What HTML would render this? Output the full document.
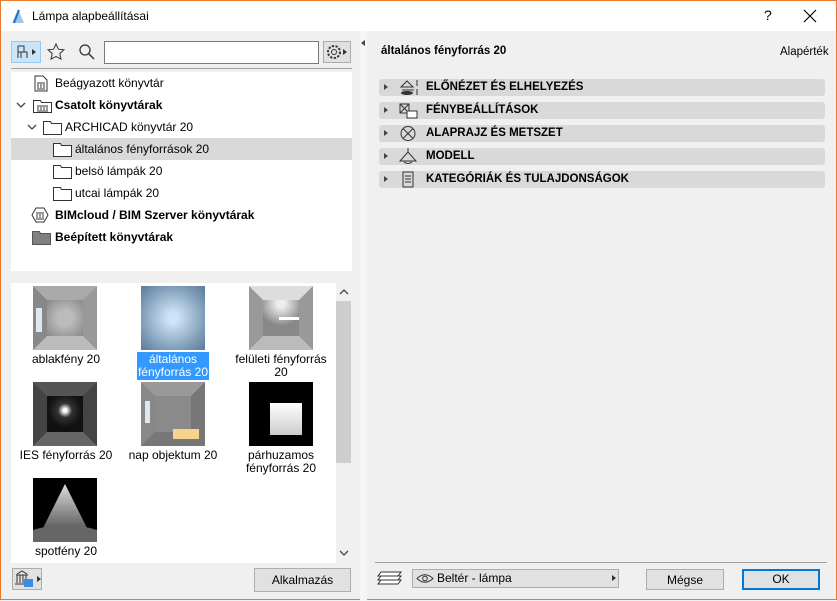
<!DOCTYPE html><html><head><meta charset="utf-8"><style>
*{box-sizing:border-box;margin:0;padding:0}
body{width:837px;height:600px;overflow:hidden;font-family:"Liberation Sans",sans-serif;font-size:12px;color:#000;background:#f0f0f0;position:relative}
.win{position:absolute;left:0;top:0;width:837px;height:600px;border:1px solid #e8792b;}
.abs{position:absolute}
.title{left:0;top:0;width:835px;height:30px;background:#fff}
.tree{left:10px;top:71px;width:341px;height:199px;background:#fff}
.row{position:absolute;left:0;width:341px;height:22px;line-height:22px;font-size:12px}
.b{font-weight:bold}
.fold{position:absolute;top:4px}
.thumbs{left:10px;top:282px;width:325px;height:280px;background:#fff}
.th{position:absolute;width:64px;height:64px}
.lbl{position:absolute;width:110px;text-align:center;font-size:12px;line-height:13px}
.sec{position:absolute;left:378px;width:446px;height:17px;background:#d9d9d9;border-radius:3px;font-weight:bold;font-size:11.5px;line-height:17px}
.sec .t{position:absolute;left:47px}
.sec .a{position:absolute;left:5px;top:5px;border-left:4px solid #444;border-top:3.5px solid transparent;border-bottom:3.5px solid transparent}
.btn{position:absolute;height:22px;background:#e1e1e1;border:1px solid #adadad;text-align:center;line-height:20px;font-size:12px}
</style></head><body><div class="win">
<div class="abs title"></div>
<svg class="abs" style="left:9px;top:7px" width="16" height="16"><path d="M2 15 L8 1 L14 15 Z" fill="#9cc8ee"/><path d="M4 15 L9 2" stroke="#2a6fc0" stroke-width="2"/></svg>
<div class="abs" style="left:31px;top:8px;font-size:12px">Lámpa alapbeállításai</div>
<div class="abs" style="left:763px;top:6px;font-size:14px">?</div>
<svg class="abs" style="left:802px;top:8px" width="14" height="14"><path d="M1 1l12 12M13 1L1 13" stroke="#000" stroke-width="1.2"/></svg>

<div class="abs" style="left:10px;top:40px;width:30px;height:22px;background:#cce4f7;border:1px solid #99c9ef"></div>
<svg class="abs" style="left:14px;top:43px" width="24" height="16"><path d="M3 2h6v6h3v6M3 2v12M3 8h9M6 8v6" stroke="#333" fill="none"/><path d="M17 5l4 3-4 3z" fill="#333"/></svg>
<svg class="abs" style="left:45px;top:41px" width="20" height="20"><path d="M10 2l2.4 5.2 5.6.6-4.2 3.8 1.2 5.6L10 14.4 5 17.2l1.2-5.6L2 7.8l5.6-.6z" fill="none" stroke="#333"/></svg>
<svg class="abs" style="left:77px;top:42px" width="18" height="18"><circle cx="7" cy="7" r="5" fill="none" stroke="#333" stroke-width="1.3"/><path d="M11 11l5 5" stroke="#333" stroke-width="1.5"/></svg>
<div class="abs" style="left:103px;top:40px;width:215px;height:23px;background:#fff;border:1px solid #7a7a7a"></div>
<div class="abs" style="left:322px;top:40px;width:28px;height:22px;background:#e1e1e1;border:1px solid #adadad"></div>
<svg class="abs" style="left:324px;top:42px" width="26" height="18"><circle cx="9" cy="9" r="6" fill="none" stroke="#333" stroke-dasharray="2.2 1.5" stroke-width="2"/><circle cx="9" cy="9" r="2.5" fill="none" stroke="#333"/><path d="M18 6l4 3-4 3z" fill="#333"/></svg>
<div class="abs" style="left:10px;top:67px;width:341px;height:1px;background:#a0a0a0"></div>

<div class="abs tree">
<div class="row" style="top:0"><svg class="abs" style="left:23px;top:3px" width="14" height="17"><path d="M1 1h8l4 4v11H1z" fill="#fff" stroke="#333"/><path d="M3 8h8M4 9v4M7 9v4M10 9v4M3 14h8" stroke="#333"/></svg><span style="position:absolute;left:44px">Beágyazott könyvtár</span></div>
<div class="row b" style="top:22px"><svg class="abs" style="left:5px;top:8px" width="10" height="7"><path d="M1 1l4 4 4-4" stroke="#444" fill="none" stroke-width="1.3"/></svg><svg class="fold" style="left:22px" width="20" height="15"><path d="M0.5 2.5h7l1 2h10v10h-18z" fill="#fff" stroke="#333"/><path d="M4 8h11M5 9v3M8 9v3M11 9v3M14 9v3M4 13h11" stroke="#333"/></svg><span style="position:absolute;left:44px">Csatolt könyvtárak</span></div>
<div class="row" style="top:44px"><svg class="abs" style="left:16px;top:8px" width="10" height="7"><path d="M1 1l4 4 4-4" stroke="#444" fill="none" stroke-width="1.3"/></svg><svg class="fold" style="left:32px" width="20" height="15"><path d="M0.5 1.5h7l1 2h10v11h-18z" fill="#fff" stroke="#333"/></svg><span style="position:absolute;left:54px">ARCHICAD könyvtár 20</span></div>
<div class="row" style="top:66px;background:#d9d9d9"><svg class="fold" style="left:42px" width="20" height="15"><path d="M0.5 1.5h7l1 2h10v11h-18z" fill="#fff" stroke="#333"/></svg><span style="position:absolute;left:64px">általános fényforrások 20</span></div>
<div class="row" style="top:88px"><svg class="fold" style="left:42px" width="20" height="15"><path d="M0.5 1.5h7l1 2h10v11h-18z" fill="#fff" stroke="#333"/></svg><span style="position:absolute;left:64px">belsö lámpák 20</span></div>
<div class="row" style="top:110px"><svg class="fold" style="left:42px" width="20" height="15"><path d="M0.5 1.5h7l1 2h10v11h-18z" fill="#fff" stroke="#333"/></svg><span style="position:absolute;left:64px">utcai lámpák 20</span></div>
<div class="row b" style="top:132px"><svg class="abs" style="left:20px;top:3px" width="18" height="16"><path d="M5 1h8l4 7-4 7H5L1 8z" fill="#fff" stroke="#333"/><path d="M5 6h8M6 7v4M9 7v4M12 7v4M5 12h8" stroke="#333"/></svg><span style="position:absolute;left:44px">BIMcloud / BIM Szerver könyvtárak</span></div>
<div class="row b" style="top:154px"><svg class="fold" style="left:21px" width="20" height="15"><path d="M0.5 1.5h7l1 2h10v11h-18z" fill="#808080" stroke="#555"/></svg><span style="position:absolute;left:44px">Beépített könyvtárak</span></div>
</div>
<div class="abs" style="left:359px;top:30px;width:7px;height:570px;background:#f5f5f5"></div>
<div class="abs" style="left:360px;top:39px;border-right:4px solid #444;border-top:3.5px solid transparent;border-bottom:3.5px solid transparent"></div>

<div class="abs thumbs">
<div class="th" style="left:22px;top:3px;background:radial-gradient(circle,#bbb 30%,#888 100%);border:14px solid #999;border-color:#aaa #999 #bbb #888"></div>
<div class="abs" style="left:25px;top:25px;width:6px;height:24px;background:#dde8f0"></div>
<div class="th" style="left:130px;top:3px;background:radial-gradient(circle,#cfe4f7 10%,#7e9cb8 70%,#5b7a98 100%)"></div>
<div class="th" style="left:238px;top:3px;background:radial-gradient(circle at 50% 10%,#eee 10%,#888 60%);border:14px solid;border-color:#ddd #999 #bbb #999"></div>
<div class="abs" style="left:268px;top:34px;width:20px;height:3px;background:#fff"></div>
<div class="lbl" style="left:0;top:70px">ablakfény 20</div>
<div class="abs" style="left:126px;top:69px;width:72px;height:28px;background:#3399ff"></div>
<div class="lbl" style="left:107px;top:70px;color:#fff">általános<br>fényforrás 20</div>
<div class="lbl" style="left:215px;top:70px">felületi fényforrás<br>20</div>
<div class="th" style="left:22px;top:99px;background:radial-gradient(circle at 50% 40%,#fff 6%,#333 25%,#111 60%);border:14px solid;border-color:#555 #444 #666 #444"></div>
<div class="th" style="left:130px;top:99px;background:#8a8a8a;border:14px solid;border-color:#999 #777 #777 #888"></div>
<div class="abs" style="left:162px;top:146px;width:26px;height:10px;background:#f7d38c"></div>
<div class="abs" style="left:134px;top:118px;width:5px;height:22px;background:#dde8f0"></div>
<div class="th" style="left:238px;top:99px;background:#000"></div>
<div class="abs" style="left:259px;top:120px;width:32px;height:32px;background:linear-gradient(#fff,#ccc)"></div>
<div class="lbl" style="left:0;top:166px">IES fényforrás 20</div>
<div class="lbl" style="left:107px;top:166px">nap objektum 20</div>
<div class="lbl" style="left:215px;top:166px">párhuzamos<br>fényforrás 20</div>
<svg class="th" style="left:22px;top:195px" width="64" height="64"><defs><linearGradient id="g" x1="0" y1="0" x2="0" y2="1"><stop offset="0" stop-color="#ddd"/><stop offset="1" stop-color="#555"/></linearGradient></defs><rect width="64" height="64" fill="#000"/><path d="M32 6L8 54h48z" fill="url(#g)"/><path d="M0 52q32-10 64 0v12H0z" fill="#666"/></svg>
<div class="lbl" style="left:0;top:262px">spotfény 20</div>
</div>
<div class="abs" style="left:335px;top:282px;width:15px;height:280px;background:#f0f0f0"></div>
<div class="abs" style="left:335px;top:300px;width:15px;height:162px;background:#cdcdcd"></div>
<svg class="abs" style="left:338px;top:288px" width="10" height="7"><path d="M1 5l4-4 4 4" stroke="#444" fill="none" stroke-width="1.3"/></svg>
<svg class="abs" style="left:338px;top:549px" width="10" height="7"><path d="M1 1l4 4 4-4" stroke="#444" fill="none" stroke-width="1.3"/></svg>

<div class="btn" style="left:11px;top:567px;width:30px;height:22px"></div>
<svg class="abs" style="left:13px;top:569px" width="28" height="18"><path d="M2 5h12M3 5v8M6 5v8M9 5v8M12 5v8M1 14h14M3 4l5-3 5 3" stroke="#333" fill="none"/><rect x="10" y="9" width="9" height="8" fill="#3c8de0"/><path d="M23 6l4 3-4 3z" fill="#333"/></svg>
<div class="btn" style="left:253px;top:567px;width:97px;height:24px;line-height:22px">Alkalmazás</div>

<div class="abs b" style="left:380px;top:44px;font-weight:bold;font-size:11.5px">általános fényforrás 20</div>
<div class="abs" style="left:779px;top:45px;font-size:11.5px">Alapérték</div>
<div class="sec" style="top:78px"><span class="a"></span><svg class="abs" style="left:20px;top:0" width="22" height="17"><path d="M2 8L8 2l6 6zM3 11h12" stroke="#333" fill="none"/><ellipse cx="8" cy="14" rx="6" ry="2" fill="#333"/><path d="M18 1v6M18 10v6" stroke="#333"/></svg><span class="t">ELŐNÉZET ÉS ELHELYEZÉS</span></div>
<div class="sec" style="top:101px"><span class="a"></span><svg class="abs" style="left:20px;top:0" width="22" height="17"><rect x="1" y="2" width="9" height="9" fill="none" stroke="#333"/><path d="M1 2l9 9M10 2L1 11" stroke="#333"/><rect x="8" y="9" width="10" height="7" fill="#fff" stroke="#333"/></svg><span class="t">FÉNYBEÁLLÍTÁSOK</span></div>
<div class="sec" style="top:124px"><span class="a"></span><svg class="abs" style="left:20px;top:0" width="22" height="17"><circle cx="9" cy="8.5" r="7" fill="none" stroke="#333"/><path d="M4 3.5l10 10M14 3.5l-10 10" stroke="#333"/></svg><span class="t">ALAPRAJZ ÉS METSZET</span></div>
<div class="sec" style="top:147px"><span class="a"></span><svg class="abs" style="left:20px;top:0" width="22" height="17"><path d="M9 0v4M9 4L1 13h16z" stroke="#333" fill="none"/><path d="M5 14q4 3 8 0" stroke="#333" fill="none"/></svg><span class="t">MODELL</span></div>
<div class="sec" style="top:170px"><span class="a"></span><svg class="abs" style="left:20px;top:0" width="22" height="17"><rect x="4" y="1" width="10" height="15" fill="none" stroke="#333"/><path d="M6 5h6M6 8h6M6 11h6" stroke="#333"/></svg><span class="t">KATEGÓRIÁK ÉS TULAJDONSÁGOK</span></div>

<div class="abs" style="left:374px;top:561px;width:452px;height:1px;background:#a0a0a0"></div>
<svg class="abs" style="left:376px;top:569px" width="26" height="16"><path d="M4 2h20l-3 4H1zM4 6h20l-3 4H1zM4 10h20l-3 4H1z" fill="#fff" stroke="#333"/></svg>
<div class="btn" style="left:411px;top:568px;width:207px;height:19px;text-align:left;line-height:17px;padding-left:24px">Beltér - lámpa</div>
<svg class="abs" style="left:415px;top:572px" width="18" height="11"><path d="M1 5.5Q9-2 17 5.5Q9 13 1 5.5z" fill="none" stroke="#333"/><circle cx="9" cy="5.5" r="2.3" fill="none" stroke="#333"/></svg>
<div class="abs" style="left:611px;top:574px;border-left:4px solid #333;border-top:3.5px solid transparent;border-bottom:3.5px solid transparent"></div>
<div class="btn" style="left:645px;top:568px;width:78px;height:21px">Mégse</div>
<div class="btn" style="left:741px;top:568px;width:78px;height:21px;border:2px solid #0078d7;line-height:17px">OK</div>
</div></body></html>
